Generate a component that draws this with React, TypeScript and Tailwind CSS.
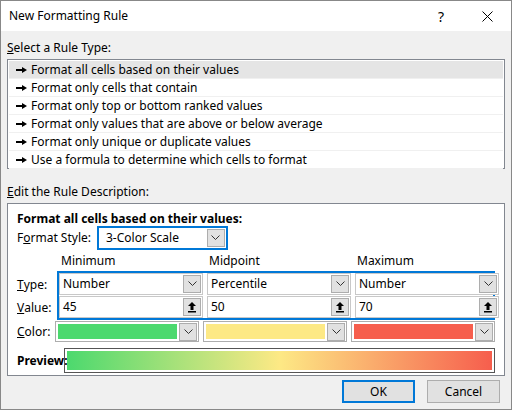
import React from "react"

const Chevron = () => (
  <svg width="9" height="6" viewBox="0 0 9 6"><path d="M0.5 0.5 L4.5 4.5 L8.5 0.5" fill="none" stroke="#333" strokeWidth="1" /></svg>
)

const DropBtn = () => (
  <div className="flex h-[18px] w-[18px] items-center justify-center border border-[#adadad] bg-[#e1e1e1]">
    <Chevron />
  </div>
)

const UpBtn = () => (
  <div className="flex h-[18px] w-[18px] items-center justify-center border border-[#adadad] bg-[#e1e1e1]">
    <svg width="10" height="12" viewBox="0 0 10 12"><path d="M5 1 L9 5 H6.5 V9 H3.5 V5 H1 Z" fill="#000" /><rect x="1" y="10" width="8" height="1.5" fill="#000" /></svg>
  </div>
)

const Field = ({ text, upload }: { text: string; upload?: boolean }) => (
  <div className="flex h-[22px] w-[144px] items-center justify-between border border-[#c8c8c8] bg-white pl-[3px] pr-[1px]">
    <span>{text}</span>
    {upload ? <UpBtn /> : <DropBtn />}
  </div>
)

const Swatch = ({ color }: { color: string }) => (
  <div className="flex h-[21px] w-[144px] items-center gap-[2px] border border-[#adadad] bg-white p-[2px] pr-[1px]">
    <div className="h-full flex-1" style={{ background: color }} />
    <DropBtn />
  </div>
)

const rules = [
  "Format all cells based on their values",
  "Format only cells that contain",
  "Format only top or bottom ranked values",
  "Format only values that are above or below average",
  "Format only unique or duplicate values",
  "Use a formula to determine which cells to format",
]

export default function App() {
  return (
    <div className="h-[410px] w-[512px] overflow-hidden border border-[#888] bg-[#f0f0f0] font-['Segoe_UI','Noto_Sans',sans-serif] text-[12px] text-black">
      <div className="flex h-[30px] items-center bg-white pl-[8px]">
        <span className="flex-1 text-[12px]">New Formatting Rule</span>
        <span className="w-[46px] text-center text-[14px]">?</span>
        <svg className="mx-[18px]" width="11" height="11" viewBox="0 0 11 11"><path d="M0.5 0.5 L10.5 10.5 M10.5 0.5 L0.5 10.5" stroke="#000" strokeWidth="1" /></svg>
      </div>
      <div className="px-[6px]">
        <div className="mt-[8px] h-[18px] leading-[18px]"><u>S</u>elect a Rule Type:</div>
        <div className="mt-[2px] h-[110px] border border-[#828790] bg-white p-[1px]">
          {rules.map((r, i) => (
            <div key={r} className={`flex h-[18px] items-center gap-[4px] border-b border-[#f0f0f0] pl-[7px] ${i === 0 ? "bg-[#e5e5e5]" : ""}`}>
              <svg width="11" height="6" viewBox="0 0 11 6"><path d="M0 2 H6 V0 L11 3 L6 6 V4 H0 Z" fill="#000" /></svg>
              <span>{r}</span>
            </div>
          ))}
        </div>
        <div className="mt-[14px] h-[18px] leading-[18px]"><u>E</u>dit the Rule Description:</div>
        <div className="mt-[2px] h-[173px] border border-[#828790] bg-white px-[9px] pt-[7px]">
          <div className="font-bold leading-[15px]">Format all cells based on their values:</div>
          <div className="flex items-center gap-[6px]">
            <span>F<u>o</u>rmat Style:</span>
            <div className="flex h-[24px] w-[131px] items-center justify-between border-2 border-[#0078d7] pl-[7px] pr-[1px]">
              <span>3-Color Scale</span>
              <DropBtn />
            </div>
          </div>
          <div className="flex h-[21px] items-end pb-[1px] pl-[44px]">
            <span className="w-[148px]">Minimum</span>
            <span className="w-[148px]">Midpoint</span>
            <span>Maximum</span>
          </div>
          <div className="flex">
            <div className="flex w-[42px] flex-col pt-[2px]">
              <span className="flex h-[23px] items-center"><u>T</u>ype:</span>
              <span className="flex h-[23px] items-center"><u>V</u>alue:</span>
            </div>
            <div className="grid grid-cols-[144px_144px_138px] gap-x-[4px] gap-y-[1px] border-2 border-[#0078d7]">
              <Field text="Number" />
              <Field text="Percentile" />
              <Field text="Number" />
              <Field text="45" upload />
              <Field text="50" upload />
              <Field text="70" upload />
            </div>
          </div>
          <div className="mt-[1px] flex items-center">
            <span className="w-[44px]"><u>C</u>olor:</span>
            <div className="flex gap-[4px]">
              <Swatch color="#4cd96e" />
              <Swatch color="#fde985" />
              <Swatch color="#f65e4d" />
            </div>
          </div>
          <div className="mt-[6px] flex items-center">
            <span className="w-[47px] font-bold">Preview:</span>
            <div className="h-[25px] w-[431px] border border-[#555] p-[2px]">
              <div className="h-full w-full bg-[linear-gradient(to_right,#4cd96e,#fde985_50%,#f65e4d)]" />
            </div>
          </div>
        </div>
        <div className="mt-[4px] flex justify-end gap-[12px] pr-[5px]">
          <button className="h-[23px] w-[73px] border-2 border-[#0078d7] bg-[#e1e1e1]">OK</button>
          <button className="h-[23px] w-[73px] border border-[#adadad] bg-[#e1e1e1]">Cancel</button>
        </div>
      </div>
    </div>
  )
}
